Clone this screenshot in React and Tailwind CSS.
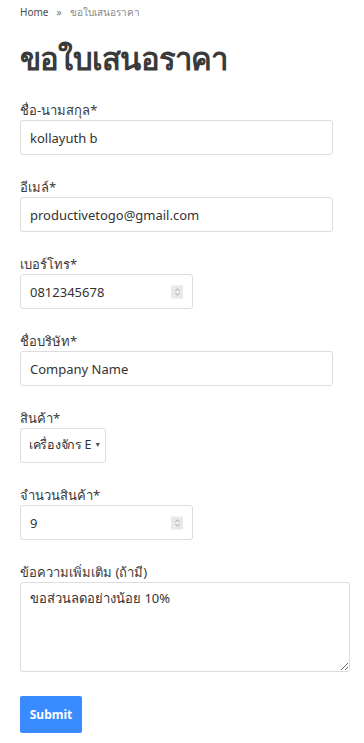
import React from "react";

function Spinner() {
  return (
    <span className="absolute right-[10px] top-1/2 -translate-y-1/2 w-[12px] h-[13px] bg-[#e9e9ed] flex flex-col items-center justify-center">
      <svg viewBox="0 0 8 10" className="w-[7px] h-[9px]" fill="none" stroke="#9a9a9a" strokeWidth="1">
        <path d="M1.5 3.5 L4 1.5 L6.5 3.5" />
        <path d="M1.5 6.5 L4 8.5 L6.5 6.5" />
      </svg>
    </span>
  );
}

function Field({ label, children }) {
  return (
    <div className="flex flex-col">
      <label className="text-[13px] leading-[18px] text-[#3a3a3a] mb-[1px]">{label}</label>
      {children}
    </div>
  );
}

const inputCls =
  "h-[35px] w-full border border-[#dddddd] rounded-[3px] px-[9px] text-[13px] text-[#333] bg-white outline-none";

export default function App() {
  return (
    <div className="min-h-screen bg-white px-[20px] pt-[5px] pb-[10px] font-['Noto_Sans','Open_Sans',sans-serif] text-[#3a3a3a]">
      <nav className="text-[10px] leading-[14px] flex items-center gap-[8px]">
        <span className="text-[#4b4b4b]">Home</span>
        <span className="text-[#777]">»</span>
        <span className="text-[#8a8a8a]">ขอใบเสนอราคา</span>
      </nav>

      <h1 className="mt-[19px] text-[31px] leading-[40px] font-bold text-[#3a3a3a] tracking-tight">
        ขอใบเสนอราคา
      </h1>

      <form className="mt-[23px] flex flex-col gap-[23px]">
        <Field label="ชื่อ-นามสกุล*">
          <input className={inputCls + " max-w-[313px]"} defaultValue="kollayuth b" readOnly />
        </Field>

        <Field label="อีเมล์*">
          <input className={inputCls + " max-w-[313px]"} defaultValue="productivetogo@gmail.com" readOnly />
        </Field>

        <Field label="เบอร์โทร*">
          <div className="relative w-[173px]">
            <input className={inputCls} defaultValue="0812345678" readOnly />
            <Spinner />
          </div>
        </Field>

        <Field label="ชื่อบริษัท*">
          <input className={inputCls + " max-w-[313px]"} defaultValue="Company Name" readOnly />
        </Field>

        <Field label="สินค้า*">
          <div className="h-[35px] w-[86px] border border-[#dddddd] rounded-[3px] pl-[8px] pr-[4px] flex items-center text-[12.5px] tracking-[-0.3px] text-[#333] bg-white">
            <span className="overflow-hidden whitespace-nowrap flex-1">เครื่องจักร E</span>
            <span className="text-[7px] text-[#555] ml-[1px]">▼</span>
          </div>
        </Field>

        <Field label="จำนวนสินค้า*">
          <div className="relative w-[173px]">
            <input className={inputCls} defaultValue="9" readOnly />
            <Spinner />
          </div>
        </Field>

        <Field label="ข้อความเพิ่มเติม (ถ้ามี)">
          <textarea
            className="h-[90px] w-[330px] border border-[#dddddd] rounded-[3px] px-[9px] py-[6px] text-[13px] text-[#333] bg-white outline-none"
            defaultValue="ขอส่วนลดอย่างน้อย 10%"
            readOnly
          />
        </Field>

        <div className="pt-[1px]">
          <button
            type="button"
            className="h-[37px] w-[62px] rounded-[2px] bg-[#3a8bff] text-white text-[12px] font-bold"
          >
            Submit
          </button>
        </div>
      </form>
    </div>
  );
}
